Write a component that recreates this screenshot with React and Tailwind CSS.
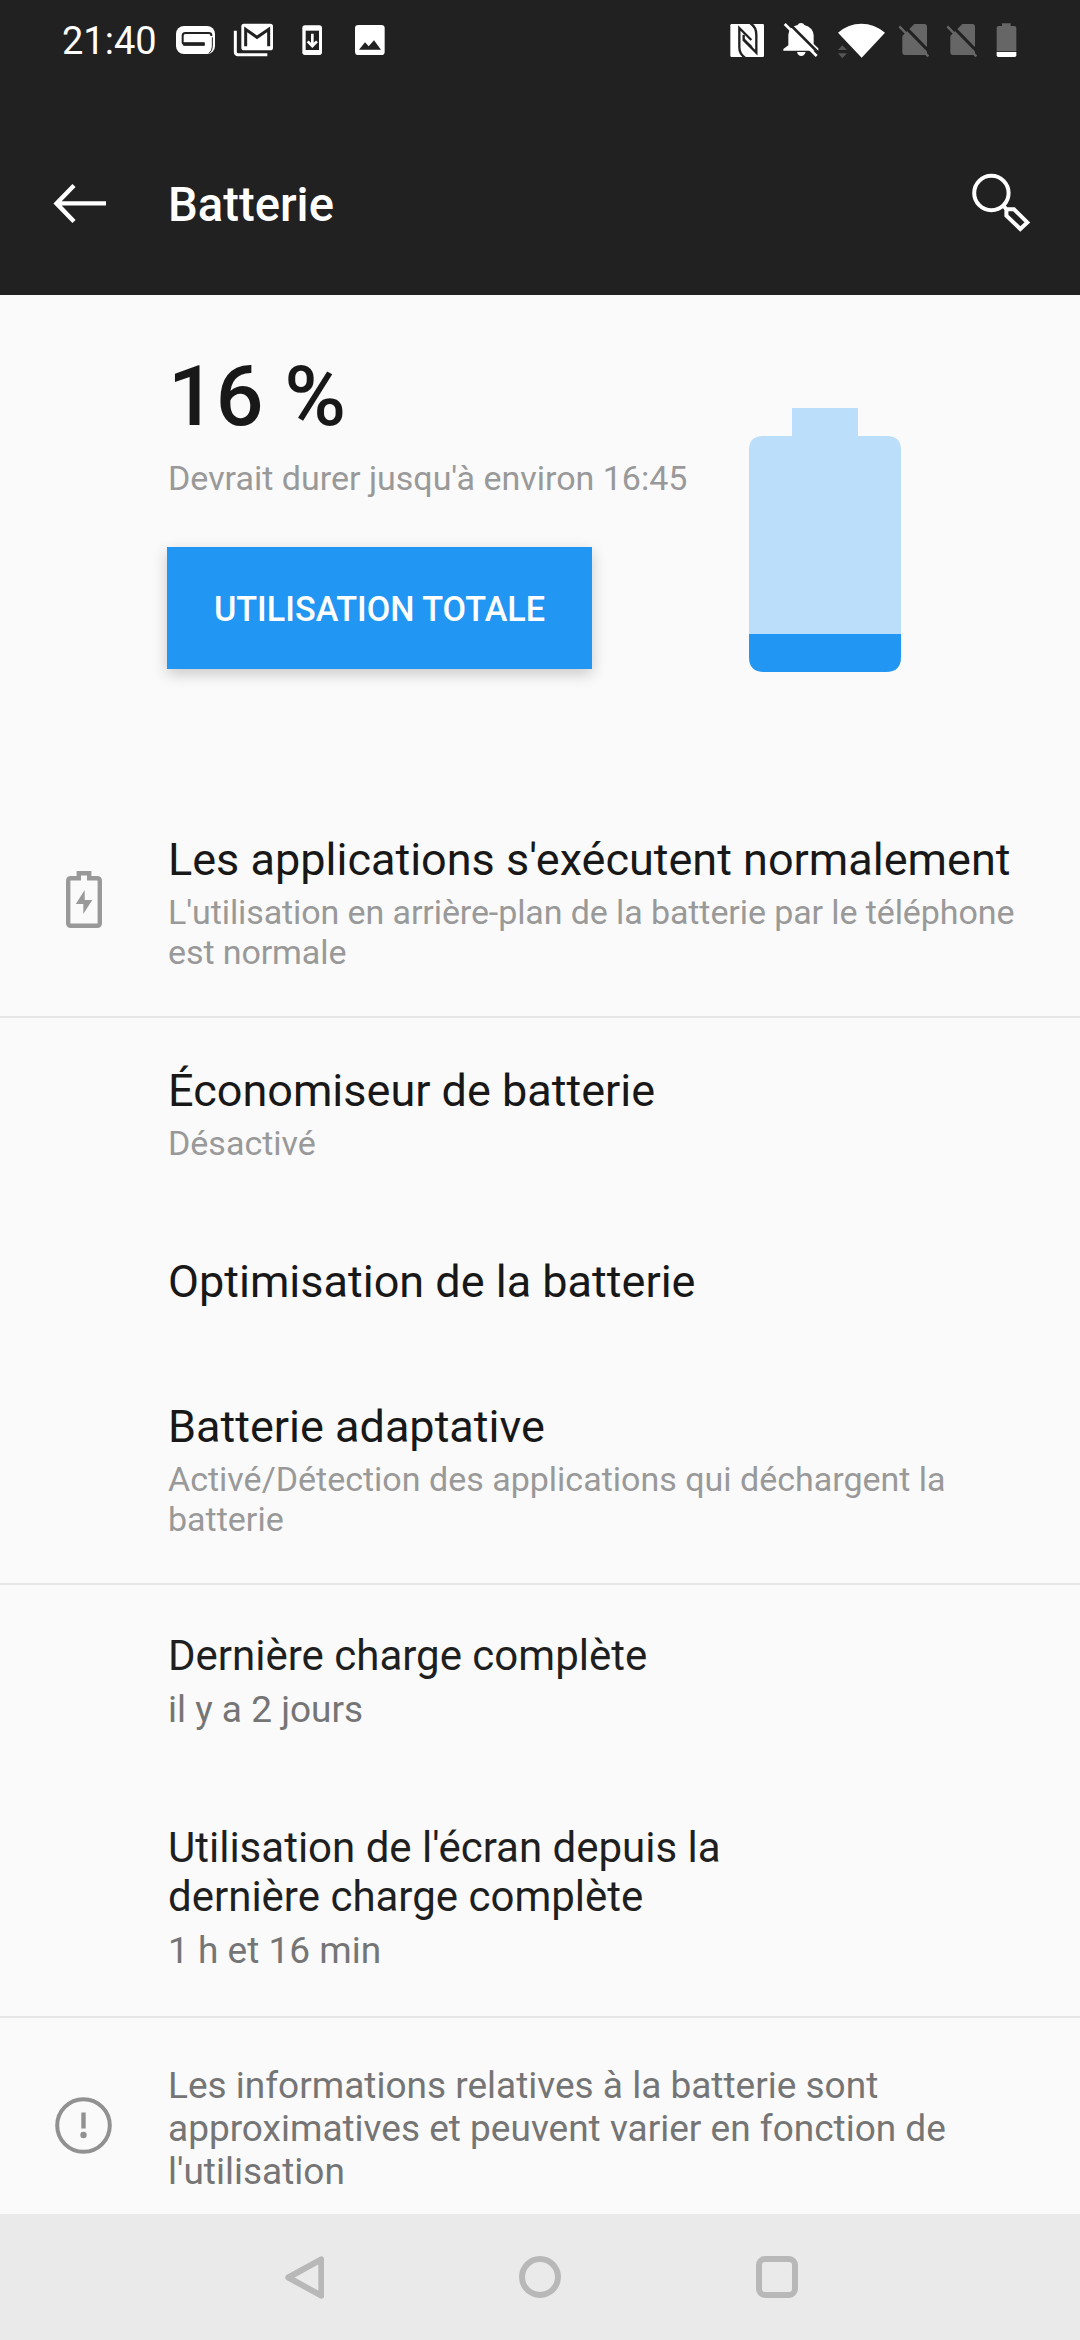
import React from 'react';

const adaptiveItems = [
  { title: 'Économiseur de batterie', summary: 'Désactivé' },
  { title: 'Optimisation de la batterie' },
  { title: 'Batterie adaptative', summary: 'Activé/Détection des applications qui déchargent la batterie' },
];

function SimOffIcon() {
  return (
    <svg className="w-[34px] h-10" viewBox="588 60 102 120">
      <path d="M640 72H670Q678 72 678 80V157Q678 165 670 165H612Q604 165 604 157V108L622 90Z" fill="#666" />
      <path d="M600 68L694 164" stroke="#212121" strokeWidth="9" />
      <path d="M595 79L682 169" stroke="#666" strokeWidth="7" />
    </svg>
  );
}

function StatusBar() {
  return (
    <div className="flex h-[82px] items-start justify-between pt-5 pl-[62px] pr-[63px]">
      <div className="flex items-start">
        <span className="w-[95px] pt-px text-[38px] leading-[40px] text-white">21:40</span>
        <svg className="ml-[18px] w-[42px] h-10" viewBox="405 60 126 120">
          <rect x="408" y="78" width="117" height="84" rx="24" fill="#fff" />
          <path d="M514 108V106Q514 99 506 99H436Q428 99 428 107V127Q428 133 436 133H494" fill="none" stroke="#212121" strokeWidth="6" />
          <path d="M430 132H494" stroke="#212121" strokeWidth="11" />
          <path d="M517 112V140Q517 152 507 160" fill="none" stroke="#212121" strokeWidth="3" />
        </svg>
        <svg className="ml-4 w-[42px] h-10" viewBox="579 60 126 120">
          <rect x="604" y="71" width="95" height="80" rx="8" fill="#fff" />
          <path d="M586 92V156Q586 164 594 164H682" fill="none" stroke="#fff" strokeWidth="9" />
          <path d="M617 139V88L651 112L686 88V139" fill="none" stroke="#212121" strokeWidth="9" />
        </svg>
        <svg className="ml-[25px] w-6 h-10" viewBox="780 60 72 120">
          <rect x="787" y="76" width="59" height="89" rx="8" fill="#fff" />
          <rect x="797" y="92" width="40" height="58" fill="#212121" />
          <path d="M817 101V136M803 124L817 138L831 124" fill="none" stroke="#fff" strokeWidth="8" />
        </svg>
        <svg className="ml-[30px] w-8 h-10" viewBox="942 60 96 120">
          <rect x="945" y="75" width="89" height="90" rx="10" fill="#fff" />
          <path d="M957 149L975 127L986 139L1002 121L1023 149Z" fill="#212121" />
        </svg>
      </div>
      <div className="flex items-start">
        <svg className="w-[34px] h-10" viewBox="87 60 102 120">
          <rect x="88" y="72" width="101" height="99" rx="4" fill="#fff" />
          <path d="M132 173Q115 162 115 142V84L151 120M128 118L152 142" fill="none" stroke="#212121" strokeWidth="7" />
          <path d="M148 70Q166 82 166 104V158L128 120V104" fill="none" stroke="#212121" strokeWidth="7" />
        </svg>
        <svg className="ml-[19px] w-9 h-10" viewBox="246 60 108 120">
          <path d="M262 136V104Q264 80 290 75Q292 69 300 69Q308 69 310 75Q336 82 338 106V132L352 145V152H247V147Z" fill="#fff" />
          <path d="M288 156H314Q310 168 301 168Q291 168 288 156Z" fill="#fff" />
          <path d="M254 60L358 164" stroke="#212121" strokeWidth="8" />
          <path d="M251 72L347 168" stroke="#fff" strokeWidth="8" />
        </svg>
        <svg className="ml-[18px] w-[50px] h-10" viewBox="408 60 150 120">
          <path d="M411 98Q442 71 481 71Q520 71 552 98L482 173Z" fill="#fff" />
          <path d="M411 150L424 136L438 150ZM411 160H438L424 175Z" fill="#555" />
        </svg>
        <div className="ml-[10px] flex gap-[14px]">
          <SimOffIcon />
          <SimOffIcon />
        </div>
        <svg className="ml-[17px] w-[21px] h-10" viewBox="885 60 63 120">
          <path d="M903 70H929V78H940Q946 78 946 84V154H887V84Q887 78 893 78H903Z" fill="#666" />
          <path d="M887 156H946V166Q946 171 941 171H892Q887 171 887 166Z" fill="#fff" />
        </svg>
      </div>
    </div>
  );
}

function AppBar() {
  return (
    <div className="flex h-[213px] items-start pt-[89px]">
      <div className="w-[168px] pl-[50px]">
        <svg className="w-[60px] h-[66px]" viewBox="50 171 60 66" fill="none" stroke="#fff" strokeWidth="4.4">
          <path d="M106 203.4H57M74 185.5L56.5 203.4L74 221.5" />
        </svg>
      </div>
      <h1 className="mt-[7px] flex-1 text-[47.2px] leading-[55px] font-medium text-white">Batterie</h1>
      <svg className="mr-[45px] w-[66px] h-[66px]" viewBox="969 171 66 66" fill="none" stroke="#fff" strokeWidth="4">
        <circle cx="991.4" cy="193" r="17.2" />
        <path d="M1003 205.3L1006.4 209.3H1014L1027.3 222.4L1020.3 229L1006.4 215.7V209.3" />
      </svg>
    </div>
  );
}

function Item({ title, summary, summaryClass = '' }) {
  return (
    <div>
      <h2 className="text-[45px] leading-[53px] text-[#181818]">{title}</h2>
      {summary && <p className={`mt-1.5 text-[34px] leading-[40px] text-[#999] ${summaryClass}`}>{summary}</p>}
    </div>
  );
}

function UsageItem({ title, value }) {
  return (
    <div>
      <h2 className="w-[600px] text-[42px] leading-[49px] text-[#1f1f1f]">{title}</h2>
      <p className="mt-2 text-[37px] leading-[43px] text-[#757575]">{value}</p>
    </div>
  );
}

export default function App() {
  return (
    <div className="flex h-[2340px] w-[1080px] flex-col overflow-hidden bg-[#fafafa] font-['Roboto',sans-serif]">
      <header className="bg-[#212121]">
        <StatusBar />
        <AppBar />
      </header>

      <section className="flex h-[538px] pt-[53px] pl-[168px]">
        <div className="w-[581px]">
          <div className="text-[84px] leading-[98px] font-medium text-[#181818]">16 %</div>
          <p className="mt-3 text-[34px] leading-[40px] text-[#999]">Devrait durer jusqu'à environ 16:45</p>
          <button className="mt-[49px] -ml-px h-[122px] w-[425px] bg-[#2196f3] pt-0.5 text-[34.2px] leading-[40px] font-medium text-white shadow-[0_5px_14px_rgba(0,0,0,0.2)]">
            UTILISATION TOTALE
          </button>
        </div>
        <svg className="mt-[60px] w-[152px] h-[264px]" viewBox="0 0 152 264">
          <path d="M43 0H109V28H138Q152 28 152 42V226H0V42Q0 28 14 28H43Z" fill="#bbdefb" />
          <path d="M0 226H152V249Q152 264 137 264H15Q0 264 0 249Z" fill="#2196f3" />
        </svg>
      </section>

      <section className="flex border-b-2 border-[#e6e6e6] pb-11">
        <div className="flex w-[168px] items-center justify-center pb-1.5">
          <svg className="w-9 h-[57px]" viewBox="0 0 36 57">
            <path d="M12.8 7.2V2.2H23.2V7.2H31Q33.8 7.2 33.8 10V52Q33.8 54.8 31 54.8H5Q2.2 54.8 2.2 52V10Q2.2 7.2 5 7.2Z" fill="none" stroke="#999" strokeWidth="4.4" />
            <path d="M18.7 19V29H26.3L17.3 43V33H9.8Z" fill="#999" />
          </svg>
        </div>
        <div className="w-[860px]">
          <Item
            title="Les applications s'exécutent normalement"
            summary="L'utilisation en arrière-plan de la batterie par le téléphone est normale"
            summaryClass="tracking-[-0.1px]"
          />
        </div>
      </section>

      <section className="flex flex-col gap-[92px] border-b-2 border-[#e6e6e6] pt-[46px] pr-[100px] pb-11 pl-[168px]">
        {adaptiveItems.map((item) => (
          <Item key={item.title} {...item} />
        ))}
      </section>

      <section className="flex flex-col gap-[92px] border-b-2 border-[#e6e6e6] pt-[46px] pb-11 pl-[168px]">
        <UsageItem title="Dernière charge complète" value="il y a 2 jours" />
        <UsageItem title="Utilisation de l'écran depuis la dernière charge complète" value="1 h et 16 min" />
      </section>

      <section className="flex flex-1 items-start pt-[46px]">
        <div className="flex w-[168px] justify-center pt-[33px] pr-px">
          <svg className="w-[57px] h-[57px]" viewBox="0 0 57 57">
            <circle cx="28.5" cy="28.5" r="26.3" fill="none" stroke="#919191" strokeWidth="4" />
            <path d="M28.5 15.5V31.5" stroke="#919191" strokeWidth="4.4" />
            <circle cx="28.5" cy="38" r="3.2" fill="#919191" />
          </svg>
        </div>
        <p className="w-[800px] text-[37px] leading-[43px] text-[#757575]">
          Les informations relatives à la batterie sont approximatives et peuvent varier en fonction de l'utilisation
        </p>
      </section>

      <nav className="flex h-[126px] items-center justify-center gap-[195px] bg-[#eaeaea]">
        <svg className="w-[42px] h-[43px]" viewBox="0 0 42 43" fill="none" stroke="#b8b8b8" strokeWidth="6" strokeLinejoin="round">
          <path d="M39.3 3.3V39.7L6.3 21.5Z" />
        </svg>
        <div className="h-[42px] w-[42px] rounded-full border-6 border-[#b8b8b8]"></div>
        <div className="h-[42px] w-[42px] rounded-[9px] border-6 border-[#b8b8b8]"></div>
      </nav>
    </div>
  );
}
